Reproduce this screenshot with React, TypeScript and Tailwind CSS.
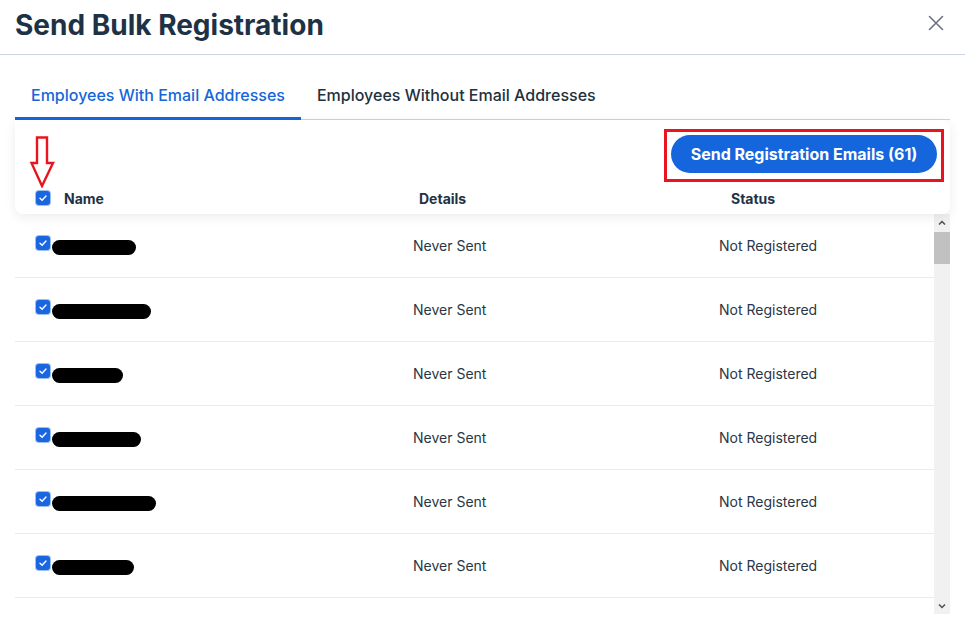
import React from "react";

const Check = () => (
  <div className="w-[14px] h-[14px] rounded-[3px] bg-[#1a66e0] ring-1 ring-[#9cc0f5] flex items-center justify-center shrink-0">
    <svg width="10" height="10" viewBox="0 0 10 10" fill="none">
      <path d="M2 5.2 L4.1 7.2 L8 3" stroke="white" strokeWidth="1.4" strokeLinecap="round" strokeLinejoin="round" />
    </svg>
  </div>
);

const pills = [84, 99, 71, 89, 104, 82];

export default function App() {
  return (
    <div className="w-[965px] h-[626px] bg-white overflow-hidden relative" style={{ fontFamily: "Inter, 'Noto Sans', sans-serif" }}>
      {/* Title bar */}
      <div className="h-[55px] border-b border-[#c8d5e2] flex items-center justify-between pl-[15px] pr-[21px]">
        <h1 className="text-[28px] font-bold text-[#1e3246] leading-none -mt-[4px]">Send Bulk Registration</h1>
        <svg width="16" height="16" viewBox="0 0 16 16" className="-mt-[8px]">
          <path d="M1.5 1.5 L14.5 14.5 M14.5 1.5 L1.5 14.5" stroke="#6b7280" strokeWidth="1.6" strokeLinecap="round" />
        </svg>
      </div>

      {/* Tabs */}
      <div className="mx-[15px] mt-[13px] flex border-b border-[#c8d5e2]">
        <div className="px-4 pt-[15px] pb-[10px] leading-6 text-[16px] font-medium text-[#1666d8] border-b-[3px] border-[#1666d8] -mb-px">
          Employees With Email Addresses
        </div>
        <div className="px-4 pt-[15px] pb-[10px] leading-6 text-[16px] font-medium text-[#22303e] border-b-[3px] border-transparent -mb-px">
          Employees Without Email Addresses
        </div>
      </div>

      {/* Header card */}
      <div className="relative z-10 mx-[15px] bg-white rounded-b-[8px] rounded-tr-[8px] shadow-[0_3px_12px_rgba(0,0,0,0.08)] flex flex-col">
        <div className="flex justify-end pt-[9px] pr-[6px]">
          <div className="border-[3px] border-[#e8141f] pt-[3px] pb-[6px] px-[4px]">
            <button className="w-[266px] h-[38px] rounded-full bg-[#1565dc] text-white text-[16px] font-bold">
              Send Registration Emails (61)
            </button>
          </div>
        </div>
        <div className="h-[32px] flex items-center text-[14px] font-bold text-[#1e3246]">
          <div className="w-[398px] flex items-center pl-[21px] gap-[14px]">
            <Check />
            <span>Name</span>
          </div>
          <div className="w-[312px] pl-[6px]">Details</div>
          <div className="pl-[6px]">Status</div>
        </div>
        <svg className="absolute left-[15px] top-[16px]" width="25" height="52" viewBox="0 0 25 52" fill="none">
          <path d="M7 1.5 H17 V27 H23 L12 50 L1.5 27 H7 Z" stroke="#e8141f" strokeWidth="2.4" strokeLinejoin="miter" />
        </svg>
      </div>

      {/* Body */}
      <div className="mx-[15px] h-[400px] flex overflow-hidden">
        <div className="flex-1 flex flex-col">
          {pills.map((w, i) => (
            <div key={i} className="h-[64px] shrink-0 border-b border-[#ebebeb] flex items-center text-[14px] text-[#2a3644]">
              <div className="w-[398px] flex items-start pl-[21px]">
                <Check />
                <div className="h-[15px] rounded-full bg-black mt-[4px] ml-[2px]" style={{ width: w }} />
              </div>
              <div className="w-[306px]">Never Sent</div>
              <div>Not Registered</div>
            </div>
          ))}
          <div className="h-[64px] shrink-0" />
        </div>
        <div className="w-[16px] bg-[#f1f1f1] flex flex-col">
          <div className="h-[17px] flex items-center justify-center">
            <svg width="8" height="6" viewBox="0 0 8 6"><path d="M1 4.5 L4 1.5 L7 4.5" stroke="#505050" strokeWidth="1.5" fill="none" /></svg>
          </div>
          <div className="h-[32px] bg-[#c1c1c1] mt-[1px]" />
          <div className="flex-1" />
          <div className="h-[16px] flex items-center justify-center">
            <svg width="8" height="6" viewBox="0 0 8 6"><path d="M1 1.5 L4 4.5 L7 1.5" stroke="#505050" strokeWidth="1.5" fill="none" /></svg>
          </div>
        </div>
      </div>
    </div>
  );
}
